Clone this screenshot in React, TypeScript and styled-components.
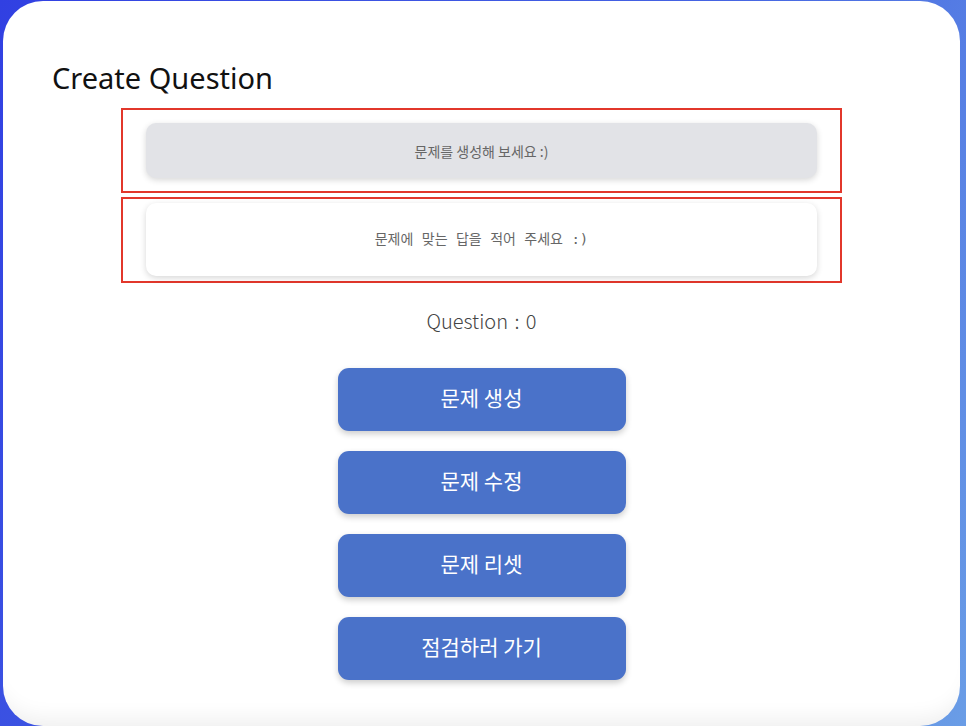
import React from 'react';
import styled, { createGlobalStyle } from 'styled-components';

const GlobalStyle = createGlobalStyle`
  html, body {
    margin: 0;
    padding: 0;
  }
  body {
    font-family: "Noto Sans", "Noto Sans CJK KR", sans-serif;
    background: linear-gradient(115deg, #3140e2 0%, #4564e2 55%, #6a9de6 100%);
    min-height: 726px;
    overflow: hidden;
  }
`;

const Page = styled.div`
  height: 726px;
  padding: 1px 6px 0 3px;
  box-sizing: border-box;
`;

const Card = styled.main`
  height: 100%;
  background: #ffffff;
  border-radius: 40px;
  box-shadow: inset 0 -22px 22px -16px rgba(0, 0, 0, 0.07);
  padding: 57px 0 0;
  box-sizing: border-box;
  display: flex;
  flex-direction: column;
`;

const Title = styled.h1`
  margin: 0 0 10px 49px;
  font-size: 29px;
  font-weight: 400;
  line-height: 40px;
  color: #111;
  font-family: "Noto Sans", "Noto Sans CJK KR", sans-serif;
`;

const Form = styled.section`
  width: 721px;
  align-self: center;
  display: flex;
  flex-direction: column;
  gap: 4px;
`;

const Outline = styled.div<{ $pad: string }>`
  border: 2px solid #e2372b;
  padding: ${(p) => p.$pad};
`;

const Field = styled.div<{ $filled?: boolean; $height: number; $mono?: boolean }>`
  height: ${(p) => p.$height}px;
  border-radius: 10px;
  background: ${(p) => (p.$filled ? '#e2e3e7' : '#ffffff')};
  box-shadow: 0 2px 6px rgba(0, 0, 0, 0.16);
  display: flex;
  align-items: center;
  justify-content: center;
  padding-bottom: ${(p) => (p.$mono ? 4 : 0)}px;
  box-sizing: border-box;
  color: #666;
  font-size: 14px;
  font-family: ${(p) =>
    p.$mono
      ? '"DejaVu Sans Mono", "Noto Sans CJK KR", monospace'
      : '"Noto Sans CJK KR", "Noto Sans", sans-serif'};
`;

const Counter = styled.p`
  margin: 25px 0 0;
  text-align: center;
  font-size: 20px;
  line-height: 26px;
  font-weight: 300;
  word-spacing: 2px;
  color: #444;
  font-family: "Noto Sans CJK KR", "Noto Sans", sans-serif;
`;

const Actions = styled.div`
  margin-top: 34px;
  display: flex;
  flex-direction: column;
  align-items: center;
  gap: 20px;
`;

const Button = styled.button`
  width: 288px;
  height: 63px;
  border: none;
  border-radius: 11px;
  background: #4a72c9;
  color: #ffffff;
  font-size: 21px;
  font-weight: 400;
  padding: 0 0 5px;
  font-family: "Noto Sans CJK KR", "Noto Sans", sans-serif;
  box-shadow: 0 3px 6px rgba(0, 0, 0, 0.2);
  cursor: pointer;
`;

const buttons = ['문제 생성', '문제 수정', '문제 리셋', '점검하러 가기'];

export default function App() {
  return (
    <>
      <GlobalStyle />
      <Page>
        <Card>
          <Title>Create Question</Title>
          <Form>
            <Outline $pad="13px 23px">
              <Field $filled $height={55}>문제를 생성해 보세요 :)</Field>
            </Outline>
            <Outline $pad="4px 23px 5px">
              <Field $height={73} $mono>문제에 맞는 답을 적어 주세요 :)</Field>
            </Outline>
          </Form>
          <Counter>Question : 0</Counter>
          <Actions>
            {buttons.map((label) => (
              <Button key={label}>{label}</Button>
            ))}
          </Actions>
        </Card>
      </Page>
    </>
  );
}
